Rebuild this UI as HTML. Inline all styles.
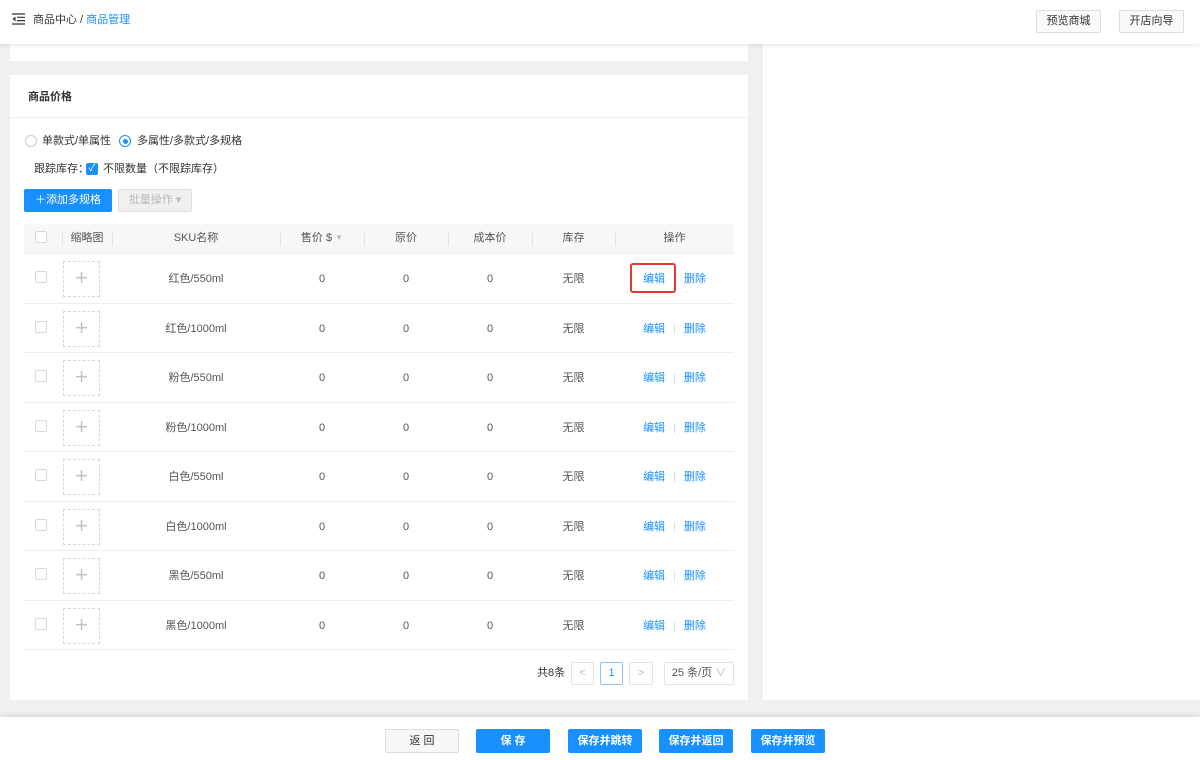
<!DOCTYPE html>
<html><head><meta charset="utf-8"><style>
*{box-sizing:border-box;margin:0;padding:0}
body{width:1200px;height:760px;background:#f0f1f3;font-family:"Liberation Sans","Noto Sans CJK SC",sans-serif;font-size:11px;color:#333;position:relative;overflow:hidden}
.top{position:absolute;left:0;top:0;width:1200px;height:44px;background:#fff;box-shadow:0 2px 4px rgba(0,0,0,.08);z-index:3}
.crumb{position:absolute;left:33px;top:13px;font-size:11px;color:#333;line-height:14px}
.crumb b{color:#1890ff;font-weight:normal}
.tbtn{position:absolute;top:10px;height:23px;border:1px solid #ddd;border-radius:2px;background:#fafafa;font-size:11px;line-height:21px;text-align:center;color:#333}
.card{position:absolute;background:#fff}
.bar{position:absolute;left:0;top:717px;width:1200px;height:43px;background:#fff;box-shadow:0 -2px 5px rgba(0,0,0,.1)}
.btn{position:absolute;top:12px;height:24px;border-radius:2px;background:#1890ff;color:#fff;font-size:11px;line-height:24px;text-align:center;font-weight:bold}
.cb{position:absolute;width:12px;height:12px;border:1px solid #d9d9d9;border-radius:2px;background:#fff}
.row{position:absolute;left:24px;width:710px;height:49.5px;border-bottom:1px solid #eee}
.c{position:absolute;text-align:center;font-size:11px;color:#555;height:14px;line-height:14px;display:flex;justify-content:center;align-items:center}
.thumb{position:absolute;left:39px;top:7px;width:37px;height:36px;border:1px dashed #d9d9d9;color:#c4c4c4;font-size:22px;line-height:32px;text-align:center;font-weight:200}
a{color:#1890ff;text-decoration:none}
.pg{position:absolute;top:662px;height:23px;border:1px solid #e3e3e3;border-radius:2px;text-align:center;line-height:21px;font-size:11px;color:#bbb;background:#fff}
</style></head><body>
<div class="top">
<svg style="position:absolute;left:12px;top:13px" width="14" height="12" viewBox="0 0 14 12"><path d="M0 1h13M5 4.3h8M5 7.6h8M0 11h13" stroke="#333" stroke-width="1.2"/><path d="M3.5 3.5L0.5 6l3 2.5z" fill="#333"/></svg>
<div class="crumb">商品中心 / <b>商品管理</b></div>
<div class="tbtn" style="left:1036px;width:65px">预览商城</div>
<div class="tbtn" style="left:1119px;width:65px">开店向导</div>
</div>
<div class="card" style="left:10px;top:44px;width:738px;height:17px"></div>
<div class="card" style="left:763px;top:44px;width:437px;height:656px"></div>
<div class="card" style="left:10px;top:75px;width:738px;height:625px">
<div style="position:absolute;left:18px;top:15px;font-weight:bold;font-size:11px;line-height:14px">商品价格</div>
<div style="position:absolute;left:0;top:42px;width:738px;border-top:1px solid #eee"></div>
<div style="position:absolute;left:15px;top:60px;width:12px;height:12px;border:1px solid #ccc;border-radius:50%"></div>
<div style="position:absolute;left:32px;top:59px;line-height:14px">单款式/单属性</div>
<div style="position:absolute;left:109px;top:60px;width:12px;height:12px;border:1px solid #1890ff;border-radius:50%"><div style="margin:2.5px;width:5px;height:5px;border-radius:50%;background:#1890ff"></div></div>
<div style="position:absolute;left:127px;top:59px;line-height:14px">多属性/多款式/多规格</div>
<div style="position:absolute;left:24px;top:87px;line-height:14px">跟踪库存：</div>
<div style="position:absolute;left:76px;top:88px;width:12px;height:12px;background:#1890ff;border-radius:2px;color:#fff;font-size:10px;line-height:12px;text-align:center">✓</div>
<div style="position:absolute;left:93px;top:87px;line-height:14px">不限数量（不限踪库存）</div>
<div style="position:absolute;left:14px;top:114px;width:88px;height:23px;background:#1890ff;border-radius:2px;color:#fff;line-height:23px;text-align:center">＋添加多规格</div>
<div style="position:absolute;left:108px;top:114px;width:74px;height:23px;background:#f0f0f0;border:1px solid #e0e0e0;border-radius:2px;color:#bbb;line-height:21px;text-align:center">批量操作 ▾</div>
</div>
<div style="position:absolute;left:24px;top:224px;width:710px;height:30px;background:#f7f7f7;border-bottom:1px solid #eee">
<div class="cb" style="left:11px;top:7px"></div>
<div style="position:absolute;left:38px;top:8px;height:14px;border-left:1px solid #e5e5e5"></div>
<div style="position:absolute;left:88px;top:8px;height:14px;border-left:1px solid #e5e5e5"></div>
<div style="position:absolute;left:256px;top:8px;height:14px;border-left:1px solid #e5e5e5"></div>
<div style="position:absolute;left:340px;top:8px;height:14px;border-left:1px solid #e5e5e5"></div>
<div style="position:absolute;left:424px;top:8px;height:14px;border-left:1px solid #e5e5e5"></div>
<div style="position:absolute;left:508px;top:8px;height:14px;border-left:1px solid #e5e5e5"></div>
<div style="position:absolute;left:591px;top:8px;height:14px;border-left:1px solid #e5e5e5"></div>
<div class="c" style="left:38px;width:50px;top:7px">缩略图</div>
<div class="c" style="left:88px;width:168px;top:7px">SKU名称</div>
<div class="c" style="left:256px;width:84px;top:7px">售价 $&nbsp;<span style="color:#bbb;font-size:8px">▼</span></div>
<div class="c" style="left:340px;width:84px;top:7px">原价</div>
<div class="c" style="left:424px;width:84px;top:7px">成本价</div>
<div class="c" style="left:508px;width:83px;top:7px">库存</div>
<div class="c" style="left:591px;width:119px;top:7px">操作</div>
</div>
<div id="rows"></div>
<div style="position:absolute;left:630px;top:263px;width:46px;height:30px;border:2px solid #e53935;border-radius:3px"></div>
<div style="position:absolute;left:537px;top:666px;font-size:11px;color:#333;line-height:14px">共8条</div>
<div class="pg" style="left:571px;width:23px">&lt;</div>
<div class="pg" style="left:600px;width:23px;border-color:#8ec5f7;color:#1890ff">1</div>
<div class="pg" style="left:629px;width:24px">&gt;</div>
<div class="pg" style="left:664px;width:70px;color:#555">25 条/页 <span style="color:#bbb">∨</span></div>
<div class="bar">
<div class="btn" style="left:385px;width:74px;background:#f7f7f7;border:1px solid #ddd;color:#333;font-weight:normal;line-height:22px">返 回</div>
<div class="btn" style="left:476px;width:74px">保 存</div>
<div class="btn" style="left:568px;width:74px">保存并跳转</div>
<div class="btn" style="left:659px;width:74px">保存并返回</div>
<div class="btn" style="left:751px;width:74px">保存并预览</div>
</div>
<script>
var n=["红色/550ml","红色/1000ml","粉色/550ml","粉色/1000ml","白色/550ml","白色/1000ml","黑色/550ml","黑色/1000ml"],h="";
n.forEach(function(s,i){var t=254+i*49.5;
h+='<div class="row" style="top:'+t+'px"><div class="cb" style="left:11px;top:17px"></div><div class="thumb">+</div>'+
'<div class="c" style="left:88px;width:168px;top:18px">'+s+'</div>'+
'<div class="c" style="left:256px;width:84px;top:18px">0</div><div class="c" style="left:340px;width:84px;top:18px">0</div><div class="c" style="left:424px;width:84px;top:18px">0</div>'+
'<div class="c" style="left:508px;width:83px;top:18px">无限</div>'+
'<div class="c" style="left:591px;width:119px;top:18px"><a>编辑</a><span style="color:#ddd;margin:0 8px">'+(i?'|':'&nbsp;')+'</span><a>删除</a></div></div>';});
document.getElementById('rows').innerHTML=h;
</script>
</body></html>
